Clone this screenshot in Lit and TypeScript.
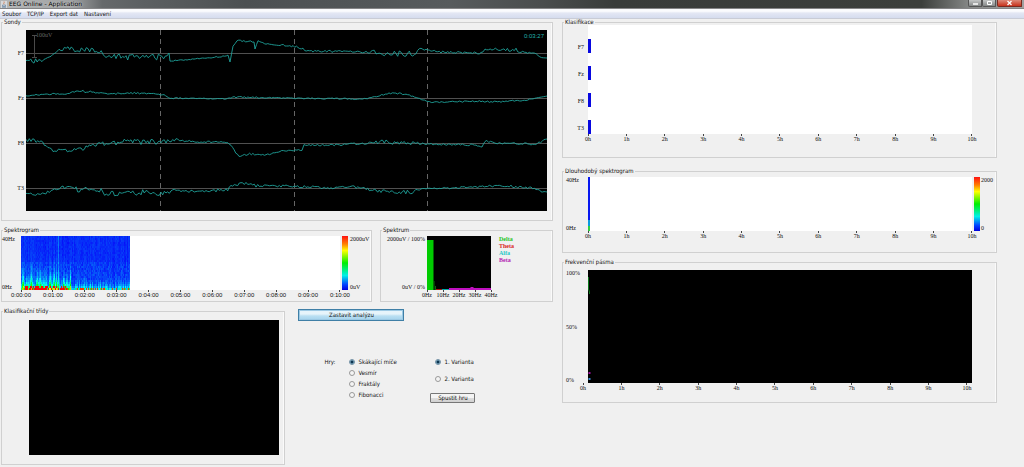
import { LitElement, html, svg, css } from "lit";
import { customElement, property } from "lit/decorators.js";

type Key = [x: number, y: number, noise: number];

const random = (seed: number) => () => {
  seed = (seed * 1664525 + 1013904223) % 4294967296;
  return seed / 4294967296;
};

/** Joins the key points with a trace that wobbles by each key's noise. */
const trace = (keys: Key[], seed: number) => {
  const next = random(seed);
  const points: string[] = [];
  keys.forEach(([x, y, noise], i) => {
    const end = keys[i + 1];
    if (!end) {
      points.push(`${x},${y}`);
      return;
    }
    const steps = Math.max(1, Math.round((end[0] - x) / 1.7));
    for (let s = 0; s < steps; s++) {
      const t = s / steps;
      const amount = noise + (end[2] - noise) * t;
      const wobble = (next() * 2 - 1) * amount;
      points.push(`${(x + (end[0] - x) * t).toFixed(1)},${(y + (end[1] - y) * t + wobble).toFixed(1)}`);
    }
  });
  return points.join(" ");
};

const CHANNELS: { name: string; keys: Key[] }[] = [
  {
    name: "F7",
    keys: [[0, 31, 1], [8, 31, 3], [16, 31, 1], [25, 26, 1], [33, 20, 1], [42, 19, 3], [52, 20, 2], [72, 20, 3], [80, 27, 3], [110, 27, 3], [141, 27, 3], [143, 23, 0], [144, 31, 0.5], [180, 28, 0.5], [202, 26, 1], [204, 32, 0], [207, 17, 1], [211, 10, 1], [228, 12, 1], [229, 19, 0], [232, 11, 1], [240, 14, 1], [254, 15, 1], [272, 17, 1], [282, 21, 1], [340, 22, 1], [350, 23, 3], [385, 24, 3], [395, 19, 2], [415, 22, 1], [455, 23, 1], [459, 19, 1], [490, 20, 2], [505, 23, 1], [512, 26, 2], [521, 28, 0]],
  },
  {
    name: "Fz",
    keys: [[0, 66, 0.5], [20, 64, 0.7], [40, 64, 0.7], [50, 61, 1.5], [66, 62, 1], [80, 64, 0.7], [110, 63, 1], [138, 65, 1], [144, 68, 0.7], [200, 69, 0.4], [210, 67, 1], [254, 68, 0.6], [340, 69, 0.8], [352, 66, 0.5], [363, 63, 0.8], [380, 64, 0.8], [392, 68, 0.5], [402, 72, 0.6], [420, 72, 0.6], [450, 71, 1], [470, 72, 0.7], [500, 70, 0.7], [521, 66, 0]],
  },
  {
    name: "F8",
    keys: [[0, 110, 1.5], [15, 111, 2], [27, 121, 1], [38, 120, 2], [55, 119, 2], [75, 114, 2.5], [100, 112, 3], [120, 112, 2.5], [135, 112, 2.5], [150, 110, 1.5], [170, 112, 0.7], [200, 112, 1], [205, 116, 1], [213, 127, 0.7], [222, 124, 1], [240, 125, 0.8], [254, 121, 0.8], [276, 120, 0.5], [278, 115, 1], [310, 115, 1], [345, 113, 1], [355, 111, 3], [385, 113, 2], [400, 114, 0.7], [450, 115, 1], [456, 117, 0], [459, 111, 1], [470, 113, 0.7], [505, 114, 1], [513, 113, 3], [521, 109, 0]],
  },
  {
    name: "T3",
    keys: [[0, 164, 1.5], [18, 164, 1.5], [27, 160, 1], [37, 157, 1.5], [55, 160, 3], [70, 159, 3], [82, 164, 3], [100, 164, 2.5], [125, 161, 3], [135, 164, 2.5], [145, 161, 2], [180, 161, 1], [200, 160, 2], [210, 154, 1.5], [230, 155, 3], [240, 156, 1], [270, 156, 1.5], [300, 158, 0.8], [330, 157, 1.5], [350, 161, 2], [365, 162, 1.5], [388, 162, 2], [395, 158, 1], [420, 158, 1], [450, 157, 1], [480, 156, 1.5], [505, 158, 1], [515, 161, 1], [521, 162, 0]],
  },
];

const HOURS = Array.from({ length: 11 }, (_, i) => `${i}h`);
const MINUTES = Array.from({ length: 11 }, (_, i) => `0:${String(i).padStart(2, "0")}:00`);
const HERTZ = ["0Hz", "10Hz", "20Hz", "30Hz", "40Hz"];

@customElement("eeg-panel")
export class EegPanel extends LitElement {
  @property() heading = "";

  static styles = css`
    :host { display: block; min-width: 0; }
    fieldset {
      margin: 0; padding: 0; min-width: 0;
      border: 1px solid #d0d0d0;
      box-shadow: inset -1px 0 #fafafa;
    }
    legend {
      margin-left: 1px; padding: 0 1px;
      line-height: 6px; color: #111; white-space: nowrap;
    }
  `;

  render() {
    return html`<fieldset><legend>${this.heading}</legend><slot></slot></fieldset>`;
  }
}

@customElement("eeg-axis")
export class EegAxis extends LitElement {
  @property({ attribute: false }) labels: string[] = [];

  static styles = css`
    :host { display: flex; justify-content: space-between; height: 8px; color: #111; }
    .tick { width: 0; display: flex; flex-direction: column; align-items: center; white-space: nowrap; line-height: 6px; }
    .tick::before { content: ""; width: 1px; height: 2px; flex: none; background: #444; }
  `;

  render() {
    return this.labels.map((label) => html`<span class="tick">${label}</span>`);
  }
}

@customElement("app-root")
export class AppRoot extends LitElement {
  static styles = css`
    :host {
      display: flex; flex-direction: column;
      min-height: 100vh; box-sizing: border-box;
      background: #f0f0f0; color: #111;
      font: 6px/6px "DejaVu Sans Condensed", "Liberation Sans", sans-serif;
      overflow: hidden;
    }
    svg { display: block; width: 100%; height: 100%; }
    button, input { font: inherit; color: inherit; margin: 0; }

    .titlebar {
      display: flex; align-items: center; height: 9px; box-sizing: border-box;
      padding-left: 1px; border-bottom: 1px solid #858587;
      background: linear-gradient(90deg, #b4b6b7 0, #a0a2a3 7%, #66696b 10%, #5c6062 14%, #4c5052 24%, #575b5d 44%, #4a4d4d 53%, #393c3a 60%, #3c3f3c 90%, #8b8d8c 95%, #a0a1a1 100%);
    }
    .appicon { width: 6px; height: 7px; margin-right: 2px; }
    .title { flex: 1; margin: 0; font-family: "DejaVu Sans", sans-serif; font-size: inherit; font-weight: normal; color: #000; text-shadow: 0 0 2px #ddd; }
    .window { align-self: flex-start; display: flex; padding-right: 2px; }
    .window button {
      width: 14px; height: 7px; padding: 0; box-sizing: border-box;
      border: 1px solid #555; border-top: 0; border-radius: 0 0 1px 2px;
      background: linear-gradient(#c3c5c5, #858888);
    }
    .window .close { width: 25px; margin-left: 1px; border-color: #7a2a20; background: linear-gradient(#dc8a7a, #c8321c); }

    .menu {
      display: flex; align-items: center; gap: 6px; height: 10px; box-sizing: border-box; padding-left: 2px;
      border-bottom: 1px solid #c9ccd6;
      background: linear-gradient(#fafbfd 0 25%, #e3e7f4 45%, #d5dcee);
    }
    .menu button { border: 0; padding: 0; background: none; }

    main { display: grid; grid-template-columns: 554fr 435fr; gap: 8px; padding-right: 27px; align-items: start; }
    .column { display: flex; flex-direction: column; min-width: 0; }
    .left { gap: 6px; padding: 0 1px 0 1px; }
    .row { display: flex; gap: 8px; }
    .serif { font-family: "Liberation Serif", serif; }
    .black { background: #000; }
    .white { background: #fff; }
    .ends { display: flex; flex-direction: column; justify-content: space-between; white-space: nowrap; }

    .probes { display: grid; grid-template-columns: 24px 1fr; height: 181px; padding: 5px 5px 9px 0; }
    .names { display: grid; grid-auto-rows: 1fr; align-items: center; text-align: right; padding-right: 2px; }
    .scope { position: relative; height: 181px; }
    .scale { position: absolute; left: 10px; top: 2px; color: #666; }
    .clock { position: absolute; right: 3px; top: 3px; color: #22b4ac; font-family: "Liberation Sans", sans-serif; }

    .gram { flex: 371; }
    .spectrum { flex: 173; }
    .gram-body { display: grid; grid-template-columns: 17px 1fr 6px 21px; column-gap: 2px; padding: 3px 0; }
    .gram-body .plot, .ramp { height: 54px; }
    .gram-body eeg-axis { grid-column: 2; font-family: "Liberation Sans", sans-serif; }
    .ramp { background: linear-gradient(#f11, #ff8000 15%, #ff0 27%, #0e0 50%, #00f0e8 73%, #0040ff 90%, #00d); }
    .spec-body { display: grid; grid-template-columns: 44px 64px 1fr; column-gap: 2px; padding: 3px 0; }
    .spec-body .ends { text-align: right; }
    .spec-body .plot { height: 54px; }
    .spec-body eeg-axis { grid-column: 2; }
    .bands { margin: 0; padding: 0 0 0 6px; list-style: none; line-height: 7px; font-weight: bold; }
    .delta { color: #1fc41f; }
    .theta { color: #d81c1c; }
    .alfa { color: #1cc6c6; }
    .beta { color: #b21cb2; }

    .classes { flex: 285; }
    .classes-body { padding: 6px 5px 9px 27px; }
    .classes-body .plot { height: 135px; }
    .controls { flex: 255; padding: 1px 0 0 5px; }
    .stop {
      display: block; width: 106px; height: 12px; padding: 0;
      border: 1px solid #3f7fa6; outline: 1px solid #9cc9e4; outline-offset: -2px;
      background: linear-gradient(#e6f4fb 0 40%, #b9dff2 60%, #a3d2ec);
    }
    .games { display: flex; padding: 38px 0 0 26px; }
    .games .caption { width: 25px; }
    .choices { display: flex; flex-direction: column; align-items: flex-start; gap: 5px; width: 81px; margin: 0; padding: 0; border: 0; }
    .variants { gap: 11px; padding-left: 5px; }
    label { display: flex; align-items: center; gap: 3px; white-space: nowrap; }
    input[type="radio"] {
      appearance: none; width: 6px; height: 6px; box-sizing: border-box;
      border: 1px solid #999; border-radius: 50%; background: #f4f4f4;
    }
    input[type="radio"]:checked { border-color: #6f8ea3; background: radial-gradient(#0d3550 35%, #9ccbe0 75%); }
    .start {
      width: 45px; height: 10px; padding: 0; margin-left: -5px;
      border: 1px solid #777; border-radius: 1px;
      background: linear-gradient(#f4f4f4 0 45%, #dcdcdc 55%, #d0d0d0);
    }

    .right { gap: 6px; }
    .right eeg-panel:first-child { margin-bottom: 4px; }
    .wide { display: grid; grid-template-columns: 23px 1fr 6px 14px; column-gap: 2px; }
    .wide eeg-axis { grid-column: 2; }
    .wide .ends:first-child { padding-left: 3px; }
    .wide .ramp + .ends { margin-left: -1px; }
    .classify { padding-bottom: 15px; }
    .classify .plot, .classify .names { height: 109px; }
    .classify .names { grid-auto-rows: 27px; box-sizing: border-box; padding-top: 8px; }
    .long { padding: 3px 0 13px; }
    .long .plot { height: 54px; }
    .freq { padding: 5px 0 11px; }
    .freq .plot { height: 113px; }
    .freq eeg-axis { margin: 0 5px 0 -5px; }
  `;

  private spectrogram() {
    const next = random(77);
    const cells = [];
    for (let x = 0; x < 110; x++) {
      const early = x < 50;
      const burst = (early ? 0.75 : 0.45) * (0.4 + next());
      const reach = (early ? 6 : 3.5) * (0.5 + next());
      const streak = x === 37 ? 0.1 : next() * 0.03;
      for (let y = 0; y < 54; y += 2) {
        const depth = 54 - y;
        const low = depth < 30 ? 0.03 : 0;
        let value = streak + next() * (0.03 + low) + burst * Math.exp(-depth / reach);
        if (depth <= 4 && x > 3 && x < 46 && next() > 0.45) value = 1;
        if (depth <= 2 && x >= 46 && next() > 0.75) value = 0.95;
        const hue = Math.round(238 - 238 * Math.min(1, value));
        cells.push(svg`<rect x=${x} y=${y} width="1" height="2" fill=${`hsl(${hue} 95% 50%)`}></rect>`);
      }
    }
    return html`<svg viewBox="0 0 321 54" preserveAspectRatio="none" shape-rendering="crispEdges" aria-hidden="true">${cells}</svg>`;
  }

  private scope() {
    return html`<svg viewBox="0 0 521 181" preserveAspectRatio="none" aria-hidden="true">
      ${[23.5, 68.5, 113.5, 158.5].map((y) => svg`<path d=${`M0 ${y}H521`} stroke="#505050"></path>`)}
      ${[134.5, 268.5, 401.5].map((x) => svg`<path d=${`M${x} 0V181`} stroke="#666" stroke-dasharray="5 4"></path>`)}
      <path d="M8.5 5V28M6 5.5h5M6 27.5h5" stroke="#4a4a4a" fill="none"></path>
      ${CHANNELS.map((c, i) => svg`<polyline points=${trace(c.keys, 11 + i * 37)} fill="none" stroke="#1fa39b" stroke-width="0.9"></polyline>`)}
    </svg>`;
  }

  render() {
    return html`
      <header class="titlebar">
        <svg class="appicon" viewBox="0 0 6 7" aria-hidden="true">
          <rect width="6" height="7" fill="#d6d8da"></rect>
          <path d="M3 .5C4 1.500 2 2 3 3.200" stroke="#d0602c" stroke-width=".7" fill="none"></path>
          <path d="M1.500 4h3v1.500h-3zM1 6.300h4" stroke="#55789c" stroke-width=".6" fill="none"></path>
        </svg>
        <h1 class="title">EEG Online - Application</h1>
        <div class="window">
          <button aria-label="Minimalizovat"><svg viewBox="0 0 12 6"><path d="M4 4h5" stroke="#fff" stroke-width="1.500"></path></svg></button>
          <button aria-label="Maximalizovat"><svg viewBox="0 0 12 6"><path d="M4.500 1.500h4v3h-4z" stroke="#fff" fill="none"></path></svg></button>
          <button class="close" aria-label="Zavřít"><svg viewBox="0 0 23 6"><path d="M9.500 1l4 4M13.500 1l-4 4" stroke="#fff" stroke-width="1.300"></path></svg></button>
        </div>
      </header>
      <nav class="menu">
        ${["Soubor", "TCP/IP", "Export dat", "Nastavení"].map((m) => html`<button>${m}</button>`)}
      </nav>
      <main>
        <div class="column left">
          <eeg-panel heading="Sondy">
            <div class="probes">
              <div class="names serif">${CHANNELS.map((c) => html`<span>${c.name}</span>`)}</div>
              <div class="scope black">
                ${this.scope()}
                <span class="scale serif">100uV</span>
                <span class="clock">0:03:27</span>
              </div>
            </div>
          </eeg-panel>

          <div class="row">
            <eeg-panel class="gram" heading="Spektrogram">
              <div class="gram-body serif">
                <div class="ends"><span>40Hz</span><span>0Hz</span></div>
                <div class="plot white">${this.spectrogram()}</div>
                <div class="ramp"></div>
                <div class="ends"><span>2000uV</span><span>0uV</span></div>
                <eeg-axis .labels=${MINUTES}></eeg-axis>
              </div>
            </eeg-panel>
            <eeg-panel class="spectrum" heading="Spektrum">
              <div class="spec-body serif">
                <div class="ends"><span>2000uV / 100%</span><span>0uV / 0%</span></div>
                <div class="plot black">
                  <svg viewBox="0 0 64 54" preserveAspectRatio="none" aria-hidden="true">
                    <rect x="0" y="4" width="6.500" height="50" fill="#0c0"></rect>
                    <path d="M7 54V45M8.500 54V50" stroke="#0a6a0a"></path>
                    <path d="M9 53.500h6" stroke="#a11"></path>
                    <path d="M15 53.500h8" stroke="#0aa"></path>
                    <path d="M22 54v-2h21l1-1h2l1 1h17v2z" fill="#c010c0"></path>
                  </svg>
                </div>
                <ul class="bands">
                  <li class="delta">Delta</li><li class="theta">Theta</li><li class="alfa">Alfa</li><li class="beta">Beta</li>
                </ul>
                <eeg-axis .labels=${HERTZ}></eeg-axis>
              </div>
            </eeg-panel>
          </div>

          <div class="row">
            <eeg-panel class="classes" heading="Klasifikační třídy">
              <div class="classes-body"><div class="plot black"></div></div>
            </eeg-panel>
            <div class="controls">
              <button class="stop">Zastavit analýzu</button>
              <div class="games">
                <span class="caption" id="games">Hry:</span>
                <fieldset class="choices" aria-labelledby="games">
                  ${["Skákající míče", "Vesmír", "Fraktály", "Fibonacci"].map(
                    (g, i) => html`<label><input type="radio" name="game" ?checked=${i === 0} />${g}</label>`
                  )}
                </fieldset>
                <fieldset class="choices variants" aria-label="Varianta">
                  ${["1. Varianta", "2. Varianta"].map(
                    (v, i) => html`<label><input type="radio" name="variant" ?checked=${i === 0} />${v}</label>`
                  )}
                  <button class="start">Spustit hru</button>
                </fieldset>
              </div>
            </div>
          </div>
        </div>

        <div class="column right">
          <eeg-panel heading="Klasifikace">
            <div class="wide classify serif">
              <div class="names">${CHANNELS.map((c) => html`<span>${c.name}</span>`)}</div>
              <div class="plot white">
                <svg viewBox="0 0 385 109" preserveAspectRatio="none" aria-hidden="true">
                  ${[14, 41, 68, 95].map((y) => svg`<rect y=${y} width="3" height="14" fill="#0808e0"></rect>`)}
                </svg>
              </div>
              <eeg-axis .labels=${HOURS}></eeg-axis>
            </div>
          </eeg-panel>

          <eeg-panel heading="Dlouhodobý spektrogram">
            <div class="wide long serif">
              <div class="ends"><span>40Hz</span><span>0Hz</span></div>
              <div class="plot white">
                <svg viewBox="0 0 385 54" preserveAspectRatio="none" aria-hidden="true">
                  <rect width="2" height="46" fill="#0818f0"></rect>
                  <rect y="43" width="2" height="6" fill="#0a9ae0"></rect>
                  <rect y="49" width="2" height="5" fill="#30d040"></rect>
                </svg>
              </div>
              <div class="ramp"></div>
              <div class="ends">
                <span>2000</span><span>0</span>
              </div>
              <eeg-axis .labels=${HOURS}></eeg-axis>
            </div>
          </eeg-panel>

          <eeg-panel heading="Frekvenční pásma">
            <div class="wide freq serif">
              <div class="ends"><span>100%</span><span>50%</span><span>0%</span></div>
              <div class="plot black">
                <svg viewBox="0 0 385 113" preserveAspectRatio="none" aria-hidden="true">
                  <path d="M.5 7V19l1 3 0 2" stroke="#0a7a1a" fill="none"></path>
                  <path d="M.5 103h2" stroke="#a010a0" stroke-width="2"></path>
                  <path d="M.5 109h2" stroke="#3a8ad0" stroke-width="2"></path>
                </svg>
              </div>
              <eeg-axis .labels=${HOURS}></eeg-axis>
            </div>
          </eeg-panel>
        </div>
      </main>
    `;
  }
}
